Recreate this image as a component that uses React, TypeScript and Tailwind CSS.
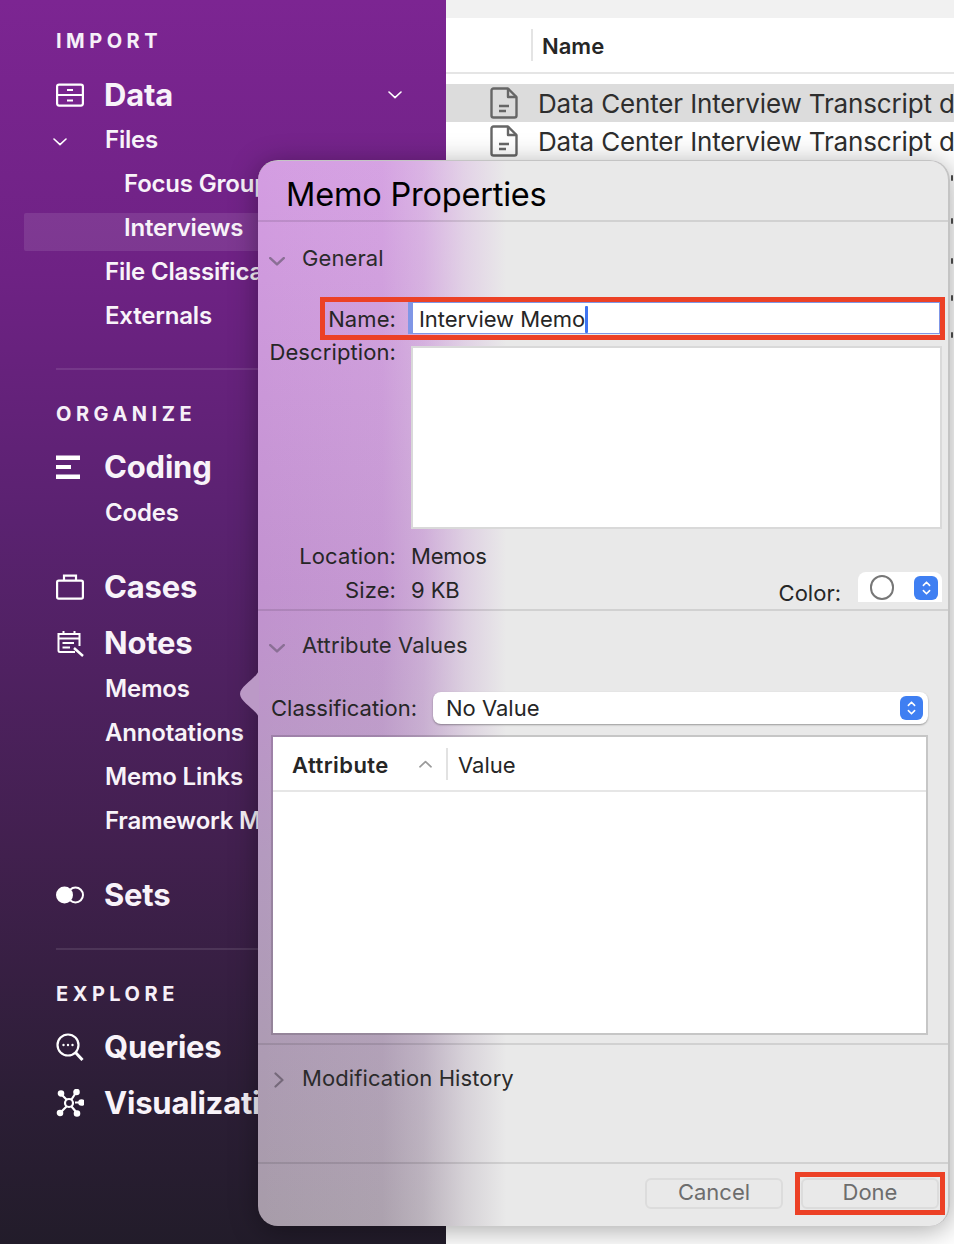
const sans = "font-['Inter','Liberation_Sans',sans-serif]";

function Chevron({ className = "", weight = 1.6 }: { className?: string; weight?: number }) {
  return (
    <svg viewBox="0 0 14 8" className={className} fill="none" stroke="currentColor" strokeWidth={weight} strokeLinecap="round" strokeLinejoin="round">
      <path d="M1 1l6 5.600L13 1" />
    </svg>
  );
}

function Stepper({ className = "" }: { className?: string }) {
  return (
    <div className={`flex items-center justify-center rounded-[6px] bg-[#3f7ff2] ${className}`}>
      <svg viewBox="0 0 10 18" className="h-[16px] w-[9px]" fill="none" stroke="white" strokeWidth="1.800" strokeLinecap="round" strokeLinejoin="round">
        <path d="M1.500 6L5 2.500 8.500 6M1.500 12L5 15.500 8.500 12" />
      </svg>
    </div>
  );
}

function DataIcon() {
  return (
    <svg viewBox="0 0 28 24" className="h-[24px] w-[28px]" fill="none" stroke="white" strokeWidth="2.200">
      <rect x="1.100" y="1.600" width="25.800" height="21" rx="2" />
      <path d="M1 12h26M11 7h6M11 17.500h6" />
    </svg>
  );
}

function CodingIcon() {
  return (
    <svg viewBox="0 0 24 24" className="h-[24px] w-[24px]" fill="white">
      <rect x="0" y="0.500" width="24" height="4.500" />
      <rect x="0" y="10" width="15" height="4" />
      <rect x="0" y="19.500" width="24" height="4.500" />
    </svg>
  );
}

function CasesIcon() {
  return (
    <svg viewBox="0 0 28 26" className="h-[26px] w-[28px]" fill="none" stroke="white" strokeWidth="2.200">
      <rect x="1.100" y="6.600" width="25.800" height="18" rx="1.600" />
      <path d="M8 6.500V1.600h12v4.900" />
    </svg>
  );
}

function NotesIcon() {
  return (
    <svg viewBox="0 0 28 28" className="h-[28px] w-[28px]" fill="none" stroke="white" strokeWidth="2">
      <path d="M19 23H4a1.500 1.500 0 0 1-1.500-1.500V5h21v12" />
      <path d="M2.500 9.500h21M7.500 2v3M18.500 2v3M6.500 14H18M6.500 18.500H14" />
      <path d="M18 19l9 8" strokeWidth="2.400" />
    </svg>
  );
}

function SetsIcon() {
  return (
    <svg viewBox="0 0 28 18" className="h-[18px] w-[28px]" fill="none">
      <circle cx="19.500" cy="9" r="7.500" stroke="white" strokeWidth="2" />
      <circle cx="8.500" cy="9" r="8.500" fill="white" />
    </svg>
  );
}

function QueriesIcon() {
  return (
    <svg viewBox="0 0 28 28" className="h-[28px] w-[28px]" fill="none" stroke="white" strokeWidth="2.200">
      <circle cx="12" cy="12" r="10.500" />
      <path d="M19.500 19.500l7 7.500" strokeWidth="3" />
      <circle cx="7.500" cy="12" r="1.200" fill="white" stroke="none" />
      <circle cx="12" cy="12" r="1.200" fill="white" stroke="none" />
      <circle cx="16.500" cy="12" r="1.200" fill="white" stroke="none" />
    </svg>
  );
}

function VizIcon() {
  return (
    <svg viewBox="0 0 28 28" className="h-[28px] w-[28px]" fill="white" stroke="white" strokeWidth="2.200">
      <path d="M5 5l5.500 5.500M20 3.500l-4.500 7M25 13.500h-6M21 24l-5.500-6.500M4 24l6.500-6.500" />
      <circle cx="13" cy="14" r="4" fill="none" />
      <circle cx="5" cy="4.500" r="2.200" />
      <circle cx="20.500" cy="3" r="2.200" />
      <circle cx="25.500" cy="13.500" r="2.200" />
      <circle cx="21" cy="24.500" r="2.200" />
      <circle cx="4" cy="24" r="2.200" />
    </svg>
  );
}

function Heading({ children }: { children: string }) {
  return <div className="h-[20px] pl-[56px] text-[20px] leading-[20px] font-bold tracking-[4.500px] text-[#f6f0f8]">{children}</div>;
}

function MainRow({ icon, label, className = "", chevron }: { icon: React.ReactNode; label: string; className?: string; chevron?: boolean }) {
  return (
    <div className={`flex h-[44px] items-center ${className}`}>
      <div className="flex w-[104px] shrink-0 pl-[56px]">{icon}</div>
      <span className="text-[31px] leading-[44px] font-bold tracking-[-0.2px] whitespace-nowrap text-[#f8f3f9]">{label}</span>
      {chevron && <Chevron className="mr-[44px] ml-auto h-[8px] w-[14px] text-white" />}
    </div>
  );
}

function SubRow({ label, indent = false, selected = false, chevron = false }: { label: string; indent?: boolean; selected?: boolean; chevron?: boolean }) {
  return (
    <div className="relative flex h-[44px] items-center">
      {selected && <div className="absolute top-[7px] left-[24px] h-[38px] w-[400px] rounded-[2px] bg-white/10" />}
      {chevron && <Chevron className="absolute top-[20px] left-[53px] h-[8px] w-[14px] text-white" />}
      <span className={`relative text-[24px] font-semibold tracking-[-0.2px] whitespace-nowrap text-[#f8f3f9] ${indent ? "pl-[124px]" : "pl-[105px]"}`}>{label}</span>
    </div>
  );
}

function Divider({ className = "" }: { className?: string }) {
  return <div className={`ml-[56px] h-[2px] bg-white/10 ${className}`} />;
}

function Sidebar() {
  return (
    <div className={`h-[1244px] w-[446px] shrink-0 overflow-hidden bg-[linear-gradient(180deg,#7c2592_0%,#6e2284_22%,#5a2270_42%,#42204f_68%,#2c1e36_88%,#221c2a_100%)] pt-[31px] ${sans}`}>
      <Heading>IMPORT</Heading>
      <MainRow icon={<DataIcon />} label="Data" chevron className="mt-[22px]" />
      <div className="mt-[1px]">
        <SubRow label="Files" chevron />
        <SubRow label="Focus Groups" indent />
        <SubRow label="Interviews" indent selected />
        <SubRow label="File Classifications" />
        <SubRow label="Externals" />
      </div>
      <Divider className="mt-[30px]" />
      <div className="mt-[34px]"><Heading>ORGANIZE</Heading></div>
      <MainRow icon={<CodingIcon />} label="Coding" className="mt-[21px]" />
      <div className="mt-[2px]"><SubRow label="Codes" /></div>
      <MainRow icon={<CasesIcon />} label="Cases" className="mt-[30px]" />
      <MainRow icon={<NotesIcon />} label="Notes" className="mt-[12px]" />
      <div className="mt-[2px]">
        <SubRow label="Memos" />
        <SubRow label="Annotations" />
        <SubRow label="Memo Links" />
        <SubRow label="Framework Matrices" />
      </div>
      <MainRow icon={<SetsIcon />} label="Sets" className="mt-[30px]" />
      <Divider className="mt-[31px]" />
      <div className="mt-[34px]"><Heading>EXPLORE</Heading></div>
      <MainRow icon={<QueriesIcon />} label="Queries" className="mt-[21px]" />
      <MainRow icon={<VizIcon />} label="Visualizations" className="mt-[12px]" />
    </div>
  );
}

function DocIcon() {
  return (
    <svg viewBox="0 0 28 32" className="h-[32px] w-[28px] shrink-0" fill="none" stroke="#666" strokeWidth="2.400" strokeLinejoin="round">
      <path d="M18 1.500H3.500a2 2 0 0 0-2 2V28.500a2 2 0 0 0 2 2h21a2 2 0 0 0 2-2V10z" />
      <path d="M18 1.500V10h8.500" />
      <path d="M9 19h10M9 24h7" />
    </svg>
  );
}

function FileRow({ selected = false }: { selected?: boolean }) {
  return (
    <div className={`flex h-[38px] items-center overflow-hidden pl-[44px] ${selected ? "bg-[#dcdcdc]" : ""}`}>
      <DocIcon />
      <span className="ml-[20px] text-[26px] tracking-[-0.15px] whitespace-nowrap text-[#2e2e2e]">Data Center Interview Transcript d</span>
    </div>
  );
}

function FilePane() {
  return (
    <div className={`h-[1244px] min-w-0 flex-1 bg-white ${sans}`}>
      <div className="h-[18px] bg-[#f1f1f1]" />
      <div className="flex h-[56px] items-center border-b-2 border-[#e5e5e5] pl-[85px]">
        <div className="h-[32px] w-[2px] bg-[#e4e4e4]" />
        <span className="ml-[9px] pt-[2px] text-[22px] font-semibold text-[#262626]">Name</span>
      </div>
      <div className="mt-[10px]">
        <FileRow selected />
        <FileRow />
      </div>
    </div>
  );
}

function SectionTitle({ open = true, label }: { open?: boolean; label: string }) {
  return (
    <div className="flex h-[28px] items-center">
      <div className="flex w-[38px] justify-center">
        {open ? (
          <Chevron weight={2.200} className="mt-[6px] h-[9px] w-[16px] text-[#8a6f95]" />
        ) : (
          <svg viewBox="0 0 10 16" className="mt-[4px] ml-[4px] h-[16px] w-[10px]" fill="none" stroke="#75697a" strokeWidth="2.200" strokeLinecap="round" strokeLinejoin="round">
            <path d="M1.500 1.500L8.500 8l-7 6.500" />
          </svg>
        )}
      </div>
      <span className="ml-[6px] text-[22px] tracking-[0.1px] text-[#2b2b2b]">{label}</span>
    </div>
  );
}

function FormLabel({ children }: { children: string }) {
  return <span className="block w-[138px] shrink-0 text-right text-[22px] tracking-[0.1px] whitespace-nowrap text-[#262626]">{children}</span>;
}

function MemoDialog() {
  return (
    <div className={`absolute top-[160px] left-[258px] flex h-[1066px] w-[692px] flex-col rounded-[20px] border-t border-r-2 border-[#c4c4c4] bg-[linear-gradient(90deg,rgba(233,233,233,0)_0%,rgba(233,233,233,0.08)_18%,rgba(233,233,233,0.3)_24%,rgba(233,233,233,0.7)_30%,rgba(233,233,233,1)_36%),linear-gradient(180deg,#d49de2_0%,#c292d0_40%,#b49abf_65%,#a79ca9_100%)] shadow-[0_4px_28px_rgba(0,0,0,0.35)] ${sans}`}>
      {/* popover arrow */}
      <svg viewBox="0 0 19 48" className="absolute top-[509px] left-[-18px] h-[48px] w-[19px]">
        <path d="M19 0C17 8 0 16 0 24s17 16 19 24z" fill="#bb99c6" />
      </svg>

      <div className="flex h-[61px] shrink-0 items-center border-b-2 border-black/10 pt-[9px] pl-[28px]">
        <span className="text-[32.500px] tracking-[-0.2px] text-black">Memo Properties</span>
      </div>

      {/* General */}
      <div className="h-[389px] shrink-0 border-b-2 border-black/10 pt-[22px]">
        <SectionTitle label="General" />
        <div className="relative mt-[30px] flex h-[32px] items-center gap-[12px]">
          <div className="shrink-0 pt-[2px]"><FormLabel>Name:</FormLabel></div>
          <div className="flex h-[32px] w-[532px] items-center border-y border-r border-l-[5px] border-[#7f96e6] bg-white pt-[2px] pl-[6px]">
            <span className="text-[22px] tracking-[-0.05px] text-[#262626]">Interview Memo</span>
            <div className="h-[27px] w-[3px] rounded-[1px] bg-[#3f74f0]" />
          </div>
          <div className="absolute top-[-5px] left-[62px] h-[43px] w-[625px] border-[5px] border-[#ec4126]" />
        </div>
        <div className="mt-[12px] flex gap-[15px]">
          <div className="flex h-[12px] items-center"><FormLabel>Description:</FormLabel></div>
          <div className="h-[183px] w-[531px] border-2 border-black/15 bg-white" />
        </div>
        <div className="mt-[10px] flex h-[34px] items-center gap-[15px]">
          <FormLabel>Location:</FormLabel>
          <span className="text-[22px] tracking-[-0.2px] text-[#262626]">Memos</span>
        </div>
        <div className="flex h-[34px] items-center gap-[15px]">
          <FormLabel>Size:</FormLabel>
          <span className="text-[22px] tracking-[-0.1px] text-[#262626]">9 KB</span>
          <div className="ml-auto flex items-start gap-[17px] self-stretch pr-[6px]">
            <span className="self-center pt-[6px] text-[22px] text-[#262626]">Color:</span>
            <div className="-mt-[1px] flex h-[30px] w-[84px] items-start justify-between rounded-t-[8px] bg-white pt-[3px] pr-[4px] pl-[12px]">
              <div className="h-[25px] w-[24px] rounded-full border-2 border-[#777]" />
              <Stepper className="mt-[1px] h-[24px] w-[24px]" />
            </div>
          </div>
        </div>
      </div>

      {/* Attribute Values */}
      <div className="h-[434px] shrink-0 border-b-2 border-black/10 pt-[20px]">
        <SectionTitle label="Attribute Values" />
        <div className="mt-[33px] flex h-[32px] items-center pr-[20px] pl-[13px]">
          <span className="w-[162px] shrink-0 text-[22px] whitespace-nowrap text-[#262626]">Classification:</span>
          <div className="flex h-[32px] flex-1 items-center justify-between rounded-[8px] bg-white pr-[5px] pl-[13px] shadow-[0_1px_2px_rgba(0,0,0,0.35)]">
            <span className="text-[22px] text-[#262626]">No Value</span>
            <Stepper className="h-[24px] w-[23px]" />
          </div>
        </div>
        <div className="mt-[11px] mr-[20px] ml-[13px] h-[300px] border-2 border-black/15 bg-white bg-clip-padding">
          <div className="flex h-[55px] items-center border-b-2 border-[#e6e6e6] pl-[19px]">
            <span className="w-[127px] pt-[3px] text-[22px] font-semibold tracking-[0.45px] text-[#262626]">Attribute</span>
            <Chevron weight={1.800} className="h-[8px] w-[13px] rotate-180 text-[#9a9a9a]" />
            <div className="ml-[14px] h-[32px] w-[2px] bg-[#e2e2e2]" />
            <span className="ml-[10px] pt-[3px] text-[22px] text-[#262626]">Value</span>
          </div>
        </div>
      </div>

      {/* Modification History */}
      <div className="flex-1 border-b-2 border-black/10 pt-[19px]">
        <SectionTitle open={false} label="Modification History" />
      </div>

      <div className="flex h-[62px] shrink-0 items-start justify-end gap-[18px] pt-[14px] pr-[9px]">
        <button className="h-[31px] w-[138px] rounded-[6px] border-2 border-[#dcdcdc] pb-[3px] text-[22px] leading-[22px] text-[#6d6d6d]">Cancel</button>
        <div className="relative">
          <button className="h-[31px] w-[138px] rounded-[6px] border-2 border-[#dcdcdc] pb-[3px] text-[22px] leading-[22px] text-[#6d6d6d]">Done</button>
          <div className="absolute -top-[6px] -right-[6px] -bottom-[6px] -left-[6px] border-[5px] border-[#ec4126]" />
        </div>
      </div>
    </div>
  );
}

// bits of the window behind, peeking out at the right edge of the sheet
const edgeMarks = [175, 218, 258, 295, 332];

export default function App() {
  return (
    <div className="relative flex h-[1244px] w-[954px] overflow-hidden bg-white">
      <Sidebar />
      <FilePane />
      <MemoDialog />
      {edgeMarks.map((y) => (
        <div key={y} className="absolute left-[951px] h-[6px] w-[2px] rounded-full bg-[#444]" style={{ top: y }} />
      ))}
    </div>
  );
}
